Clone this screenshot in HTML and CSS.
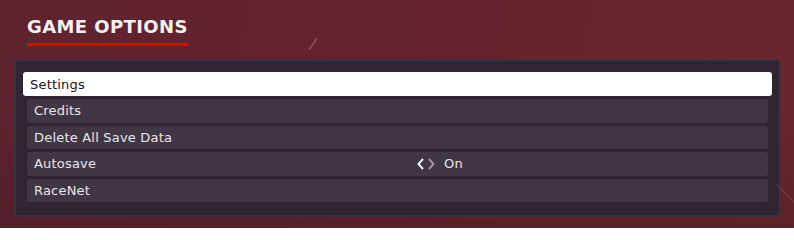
FILE: index.html
```html
<!DOCTYPE html>
<html>
<head>
<meta charset="utf-8">
<link rel="stylesheet" href="styles.css">
</head>
<body>
<div class="screen">
  <span class="streak streak-a"></span>
  <span class="streak streak-b"></span>
  <header class="header">
    <h1 class="title">GAME OPTIONS</h1>
  </header>
  <section class="panel">
    <div class="row selected"><span class="label">Settings</span></div>
    <div class="row"><span class="label">Credits</span></div>
    <div class="row"><span class="label">Delete All Save Data</span></div>
    <div class="row">
      <span class="label">Autosave</span>
      <span class="value">
        <svg class="chev" width="7" height="12" viewBox="0 0 7 12"><polyline points="6,1 1.5,6 6,11" fill="none" stroke="#f2f0f4" stroke-width="2"/></svg>
        <svg class="chev" width="7" height="12" viewBox="0 0 7 12"><polyline points="1,1 5.5,6 1,11" fill="none" stroke="#9a94a0" stroke-width="2"/></svg>
        <span class="value-text">On</span>
      </span>
    </div>
    <div class="row"><span class="label">RaceNet</span></div>
  </section>
</div>
</body>
</html>
```
FILE: styles.css
```css
html, body {
  margin: 0;
  padding: 0;
}
body {
  width: 794px;
  height: 228px;
  overflow: hidden;
  font-family: "DejaVu Sans", "Liberation Sans", sans-serif;
}
.screen {
  position: relative;
  width: 794px;
  height: 228px;
  background:
    linear-gradient(180deg, rgba(0,0,0,0) 40%, rgba(0,0,0,0.12) 100%),
    linear-gradient(100deg, #5f2330 0%, #64232f 50%, #6b262d 100%);
  display: flex;
  flex-direction: column;
}
.streak {
  position: absolute;
  width: 2px;
  background: rgba(255,255,255,0.18);
  border-radius: 1px;
  transform: rotate(35deg);
}
.streak-a {
  left: 312px;
  top: 37px;
  height: 14px;
}
.streak-b {
  left: 786px;
  top: 180px;
  height: 30px;
  transform: rotate(-45deg);
  background: rgba(255,255,255,0.08);
}
.header {
  padding: 17px 0 0 27px;
}
.title {
  display: inline-block;
  margin: 0;
  font-size: 18px;
  line-height: 20px;
  font-weight: bold;
  letter-spacing: 0.4px;
  color: #f4f0f2;
  padding-bottom: 6px;
  border-bottom: 3px solid #e10600;
}
.panel {
  margin: 13px 0 0 14px;
  width: 741px;
  padding: 11px 11px 13px;
  border: 2px solid #3b3140;
  border-radius: 5px;
  background: #2f2533;
  display: flex;
  flex-direction: column;
  gap: 3px;
}
.row {
  height: 23.5px;
  background: #413644;
  border-radius: 3px;
  display: flex;
  align-items: center;
  padding: 0 7px;
  color: #e9e5ec;
  font-size: 13px;
  letter-spacing: 0.2px;
}
.row.selected {
  height: 24px;
  margin: 0 -4px;
  background: #ffffff;
  color: #15121a;
}
.label {
  width: 383px;
  flex: none;
}
.value {
  display: flex;
  align-items: center;
  gap: 4px;
}
.value-text {
  margin-left: 5px;
}
```
